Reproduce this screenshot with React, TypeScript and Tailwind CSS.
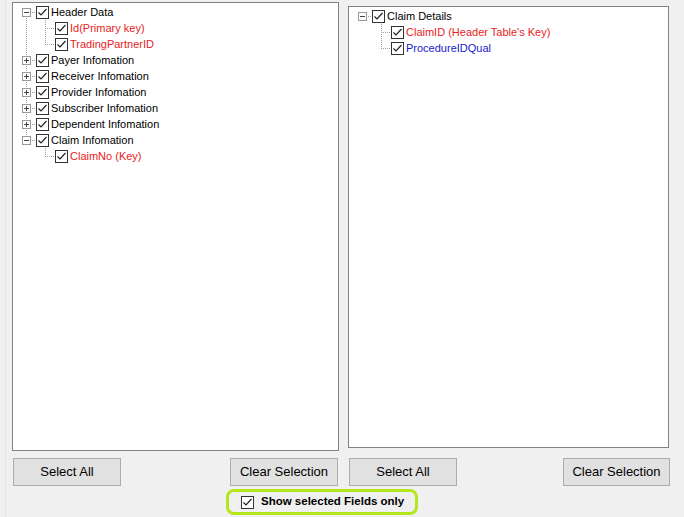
import React from 'react'

type Node = {
  label: string
  color?: string
  children?: Node[]
  expanded?: boolean
}

const RED = 'text-[#e81c24]'
const BLUE = 'text-[#1a1acc]'

const leftTree: Node[] = [
  {
    label: 'Header Data',
    expanded: true,
    children: [
      { label: 'Id(Primary key)', color: RED },
      { label: 'TradingPartnerID', color: RED },
    ],
  },
  { label: 'Payer Infomation', children: [] },
  { label: 'Receiver Infomation', children: [] },
  { label: 'Provider Infomation', children: [] },
  { label: 'Subscriber Infomation', children: [] },
  { label: 'Dependent Infomation', children: [] },
  {
    label: 'Claim Infomation',
    expanded: true,
    children: [{ label: 'ClaimNo (Key)', color: RED }],
  },
]

const rightTree: Node[] = [
  {
    label: 'Claim Details',
    expanded: true,
    children: [
      { label: "ClaimID (Header Table's Key)", color: RED },
      { label: 'ProcedureIDQual', color: BLUE },
    ],
  },
]

function CheckBox() {
  return (
    <svg width="13" height="13" viewBox="0 0 13 13" className="shrink-0">
      <rect x="0.5" y="0.5" width="12" height="12" fill="#fff" stroke="#333" />
      <polyline points="2.5,6.5 5,9 10.5,3" fill="none" stroke="#222" strokeWidth="1.2" />
    </svg>
  )
}

function dotsV(x: number, y0: number, y1: number) {
  const out: React.ReactElement[] = []
  for (let y = y0; y < y1; y += 2) out.push(<rect key={`v${x}-${y}`} x={x} y={y} width="1" height="1" fill="#a0a0a0" />)
  return out
}

function dotsH(y: number, x0: number, x1: number) {
  const out: React.ReactElement[] = []
  for (let x = x0; x < x1; x += 2) out.push(<rect key={`h${x}-${y}`} x={x} y={y} width="1" height="1" fill="#a0a0a0" />)
  return out
}

type Flat = {
  node: Node
  level: number
  hasPrev: boolean
  hasNext: boolean
  ancestors: boolean[]
}

function flatten(nodes: Node[], level: number, ancestors: boolean[], out: Flat[]) {
  nodes.forEach((n, i) => {
    const hasNext = i < nodes.length - 1
    out.push({ node: n, level, hasPrev: i > 0 || level > 0, hasNext, ancestors })
    if (n.expanded && n.children) flatten(n.children, level + 1, [...ancestors, hasNext], out)
  })
  return out
}

function TreeRow({ row }: { row: Flat }) {
  const { node, level, hasPrev, hasNext, ancestors } = row
  const w = 23 + 19 * level
  const cx = 13 + 19 * level
  const hasKids = node.children !== undefined
  return (
    <div className="flex h-4 items-center">
      <svg width={w} height="16" className="shrink-0">
        {ancestors.map((on, k) => (on ? dotsV(13 + 19 * k, 0, 16) : null))}
        {hasPrev && dotsV(cx, 0, 8)}
        {hasNext && dotsV(cx, 8, 16)}
        {dotsH(8, cx, cx + 10)}
        {hasKids && (
          <g>
            <rect x={cx - 4 + 0.5} y="4.5" width="8" height="8" fill="#fff" stroke="#999" />
            <rect x={cx - 2} y="8" width="5" height="1" fill="#444" />
            {!node.expanded && <rect x={cx} y="6" width="1" height="5" fill="#444" />}
          </g>
        )}
      </svg>
      <CheckBox />
      <span className={`ml-[2px] whitespace-nowrap text-[11px] leading-4 ${node.color ?? 'text-black'}`}>
        {node.label}
      </span>
    </div>
  )
}

function Tree({ nodes }: { nodes: Node[] }) {
  const rows = flatten(nodes, 0, [], [])
  return (
    <div className="pt-[1px]">
      {rows.map((r, i) => (
        <TreeRow key={i} row={r} />
      ))}
    </div>
  )
}

function Btn({ label, w }: { label: string; w: string }) {
  return (
    <button className={`${w} h-[28px] border border-[#adadad] bg-[#e1e1e1] text-[13px] text-black`}>
      {label}
    </button>
  )
}

export default function App() {
  return (
    <div className="h-[517px] w-[684px] overflow-hidden bg-[#f0f0f0] pl-[5px] font-['Liberation_Sans',Arial,sans-serif]">
      <div className="flex h-full flex-col border-l border-[#e4e4e4] pl-[6px] pt-[2px]">
        <div className="flex items-start gap-[9px]">
          <div className="w-[327px]">
            <div className="h-[449px] border border-[#828282] bg-white">
              <Tree nodes={leftTree} />
            </div>
            <div className="mt-[7px] flex justify-between px-px">
              <Btn label="Select All" w="w-[108px]" />
              <Btn label="Clear Selection" w="w-[108px]" />
            </div>
          </div>
          <div className="mt-[4px] w-[321px]">
            <div className="h-[442px] border border-[#828282] bg-white">
              <Tree nodes={rightTree} />
            </div>
            <div className="mt-[10px] flex w-[322px] justify-between pl-px">
              <Btn label="Select All" w="w-[108px]" />
              <Btn label="Clear Selection" w="w-[107px]" />
            </div>
          </div>
        </div>
        <div className="ml-[214px] mt-[3px] flex h-[26px] w-[192px] items-center rounded-[8px] border-[3px] border-[#b5e61d] pl-[12px]">
          <CheckBox />
          <span className="ml-[7px] whitespace-nowrap text-[11.5px] font-bold text-black">Show selected Fields only</span>
        </div>
      </div>
    </div>
  )
}
